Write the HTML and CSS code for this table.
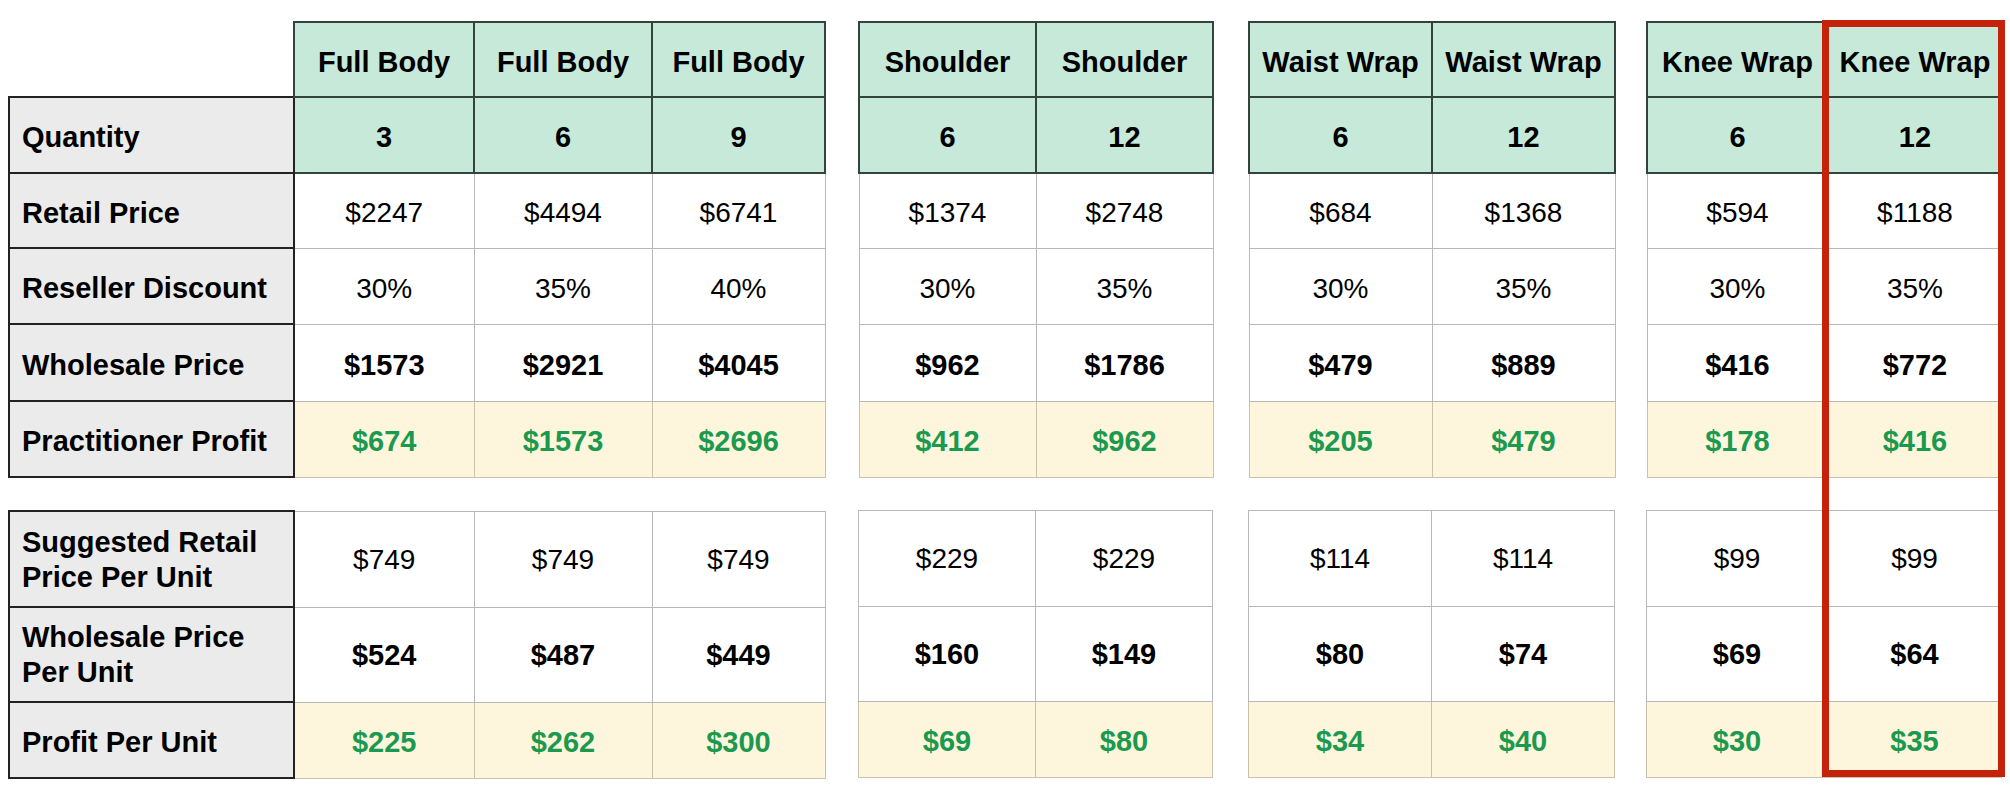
FILE: index.html
```html
<!DOCTYPE html>
<html lang="en">
<head>
<meta charset="utf-8">
<title>Reseller Pricing</title>
<link rel="stylesheet" href="styles.css">
</head>
<body>
<div class="sheet">
  <div class="group">
    <table class="tbl tbl-main">
      <colgroup><col class="c-label"><col class="c-180"><col class="c-178"><col class="c-173"></colgroup>
      <tr class="r-h"><td class="blank"></td><td class="hd">Full Body</td><td class="hd">Full Body</td><td class="hd">Full Body</td></tr>
      <tr class="r-q"><td class="lbl">Quantity</td><td class="hd">3</td><td class="hd">6</td><td class="hd">9</td></tr>
      <tr class="r-1"><td class="lbl">Retail Price</td><td class="val">$2247</td><td class="val">$4494</td><td class="val">$6741</td></tr>
      <tr class="r-2"><td class="lbl">Reseller Discount</td><td class="val">30%</td><td class="val">35%</td><td class="val">40%</td></tr>
      <tr class="r-3"><td class="lbl">Wholesale Price</td><td class="val b">$1573</td><td class="val b">$2921</td><td class="val b">$4045</td></tr>
      <tr class="r-4"><td class="lbl">Practitioner Profit</td><td class="profit">$674</td><td class="profit">$1573</td><td class="profit">$2696</td></tr>
    </table>
    <table class="tbl tbl-main">
      <colgroup><col class="c-label"><col class="c-180"><col class="c-178"><col class="c-173"></colgroup>
      <tr class="r-u1"><td class="lbl">Suggested Retail<br>Price Per Unit</td><td class="val">$749</td><td class="val">$749</td><td class="val">$749</td></tr>
      <tr class="r-u2"><td class="lbl">Wholesale Price<br>Per Unit</td><td class="val b">$524</td><td class="val b">$487</td><td class="val b">$449</td></tr>
      <tr class="r-u3"><td class="lbl">Profit Per Unit</td><td class="profit">$225</td><td class="profit">$262</td><td class="profit">$300</td></tr>
    </table>
  </div>

  <div class="group group-shoulder">
    <table class="tbl tbl-shoulder">
      <colgroup><col class="c-177"><col class="c-177"></colgroup>
      <tr class="r-h"><td class="hd">Shoulder</td><td class="hd">Shoulder</td></tr>
      <tr class="r-q"><td class="hd">6</td><td class="hd">12</td></tr>
      <tr class="r-1"><td class="val">$1374</td><td class="val">$2748</td></tr>
      <tr class="r-2"><td class="val">30%</td><td class="val">35%</td></tr>
      <tr class="r-3"><td class="val b">$962</td><td class="val b">$1786</td></tr>
      <tr class="r-4"><td class="profit">$412</td><td class="profit">$962</td></tr>
    </table>
    <table class="tbl tbl-shoulder">
      <colgroup><col class="c-177"><col class="c-177"></colgroup>
      <tr class="r-u1"><td class="val">$229</td><td class="val">$229</td></tr>
      <tr class="r-u2"><td class="val b">$160</td><td class="val b">$149</td></tr>
      <tr class="r-u3"><td class="profit">$69</td><td class="profit">$80</td></tr>
    </table>
  </div>

  <div class="group group-waist">
    <table class="tbl tbl-waist">
      <colgroup><col class="c-183"><col class="c-183"></colgroup>
      <tr class="r-h"><td class="hd">Waist Wrap</td><td class="hd">Waist Wrap</td></tr>
      <tr class="r-q"><td class="hd">6</td><td class="hd">12</td></tr>
      <tr class="r-1"><td class="val">$684</td><td class="val">$1368</td></tr>
      <tr class="r-2"><td class="val">30%</td><td class="val">35%</td></tr>
      <tr class="r-3"><td class="val b">$479</td><td class="val b">$889</td></tr>
      <tr class="r-4"><td class="profit">$205</td><td class="profit">$479</td></tr>
    </table>
    <table class="tbl tbl-waist">
      <colgroup><col class="c-183"><col class="c-183"></colgroup>
      <tr class="r-u1"><td class="val">$114</td><td class="val">$114</td></tr>
      <tr class="r-u2"><td class="val b">$80</td><td class="val b">$74</td></tr>
      <tr class="r-u3"><td class="profit">$34</td><td class="profit">$40</td></tr>
    </table>
  </div>

  <div class="group group-knee">
    <table class="tbl tbl-knee">
      <colgroup><col class="c-181"><col class="c-172"></colgroup>
      <tr class="r-h"><td class="hd">Knee Wrap</td><td class="hd">Knee Wrap</td></tr>
      <tr class="r-q"><td class="hd">6</td><td class="hd">12</td></tr>
      <tr class="r-1"><td class="val">$594</td><td class="val">$1188</td></tr>
      <tr class="r-2"><td class="val">30%</td><td class="val">35%</td></tr>
      <tr class="r-3"><td class="val b">$416</td><td class="val b">$772</td></tr>
      <tr class="r-4"><td class="profit">$178</td><td class="profit">$416</td></tr>
    </table>
    <table class="tbl tbl-knee">
      <colgroup><col class="c-181"><col class="c-172"></colgroup>
      <tr class="r-u1"><td class="val">$99</td><td class="val">$99</td></tr>
      <tr class="r-u2"><td class="val b">$69</td><td class="val b">$64</td></tr>
      <tr class="r-u3"><td class="profit">$30</td><td class="profit">$35</td></tr>
    </table>
    <div class="highlight"></div>
  </div>
</div>
</body>
</html>
```

FILE: styles.css
```css
html, body {
  margin: 0;
  padding: 0;
  background: #ffffff;
}

body {
  font-family: "Liberation Sans", Arial, Helvetica, sans-serif;
  color: #000000;
}

.sheet {
  display: flex;
  align-items: flex-start;
  padding: 21px 0 0 8px;
}

.group {
  display: flex;
  flex-direction: column;
  gap: 32px;
  position: relative;
}

.group-shoulder { margin-left: 32px; }
.group-waist { margin-left: 34px; }
.group-knee { margin-left: 30px; }

.tbl {
  border-collapse: collapse;
  table-layout: fixed;
}

.tbl-main { width: 816px; }
.tbl-shoulder { width: 354px; }
.tbl-waist { width: 366px; }
.tbl-knee { width: 355px; }

.c-label { width: 285px; }
.c-180 { width: 180px; }
.c-178 { width: 178px; }
.c-173 { width: 173px; }
.c-177 { width: 177px; }
.c-183 { width: 183px; }
.c-181 { width: 181px; }
.c-172 { width: 174px; }

.r-h { height: 75px; }
.r-q { height: 76px; }
.r-1 { height: 75px; }
.r-2 { height: 76px; }
.r-3 { height: 77px; }
.r-4 { height: 76px; }
.r-u1 { height: 96px; }
.r-u2 { height: 95px; }
.r-u3 { height: 76px; }

.tbl td {
  padding: 5px 0 0 0;
  text-align: center;
  vertical-align: middle;
  white-space: nowrap;
}

.tbl .r-u1 td,
.tbl .r-u2 td {
  padding-top: 1px;
}

.tbl .blank {
  border: none;
  background: transparent;
}

.tbl .hd {
  background: #c6e9d9;
  border: 2px solid #34433b;
  font-weight: bold;
  font-size: 29px;
}

.tbl .lbl {
  background: #ebebeb;
  border: 2px solid #222222;
  font-weight: bold;
  font-size: 29px;
  line-height: 1.2;
  text-align: left;
  padding-left: 12px;
}

.tbl .val {
  background: #ffffff;
  border: 1px solid #b8b8b8;
  font-size: 28px;
}

.tbl .val.b {
  font-weight: bold;
  font-size: 29px;
}

.tbl .profit {
  background: #fef6dc;
  border: 1px solid #c9c3ae;
  color: #1b9a4f;
  font-weight: bold;
  font-size: 29px;
}

.highlight {
  position: absolute;
  left: 176px;
  top: -1px;
  width: 183px;
  height: 757px;
  box-sizing: border-box;
  border: 7px solid #c5220c;
  pointer-events: none;
}
```
